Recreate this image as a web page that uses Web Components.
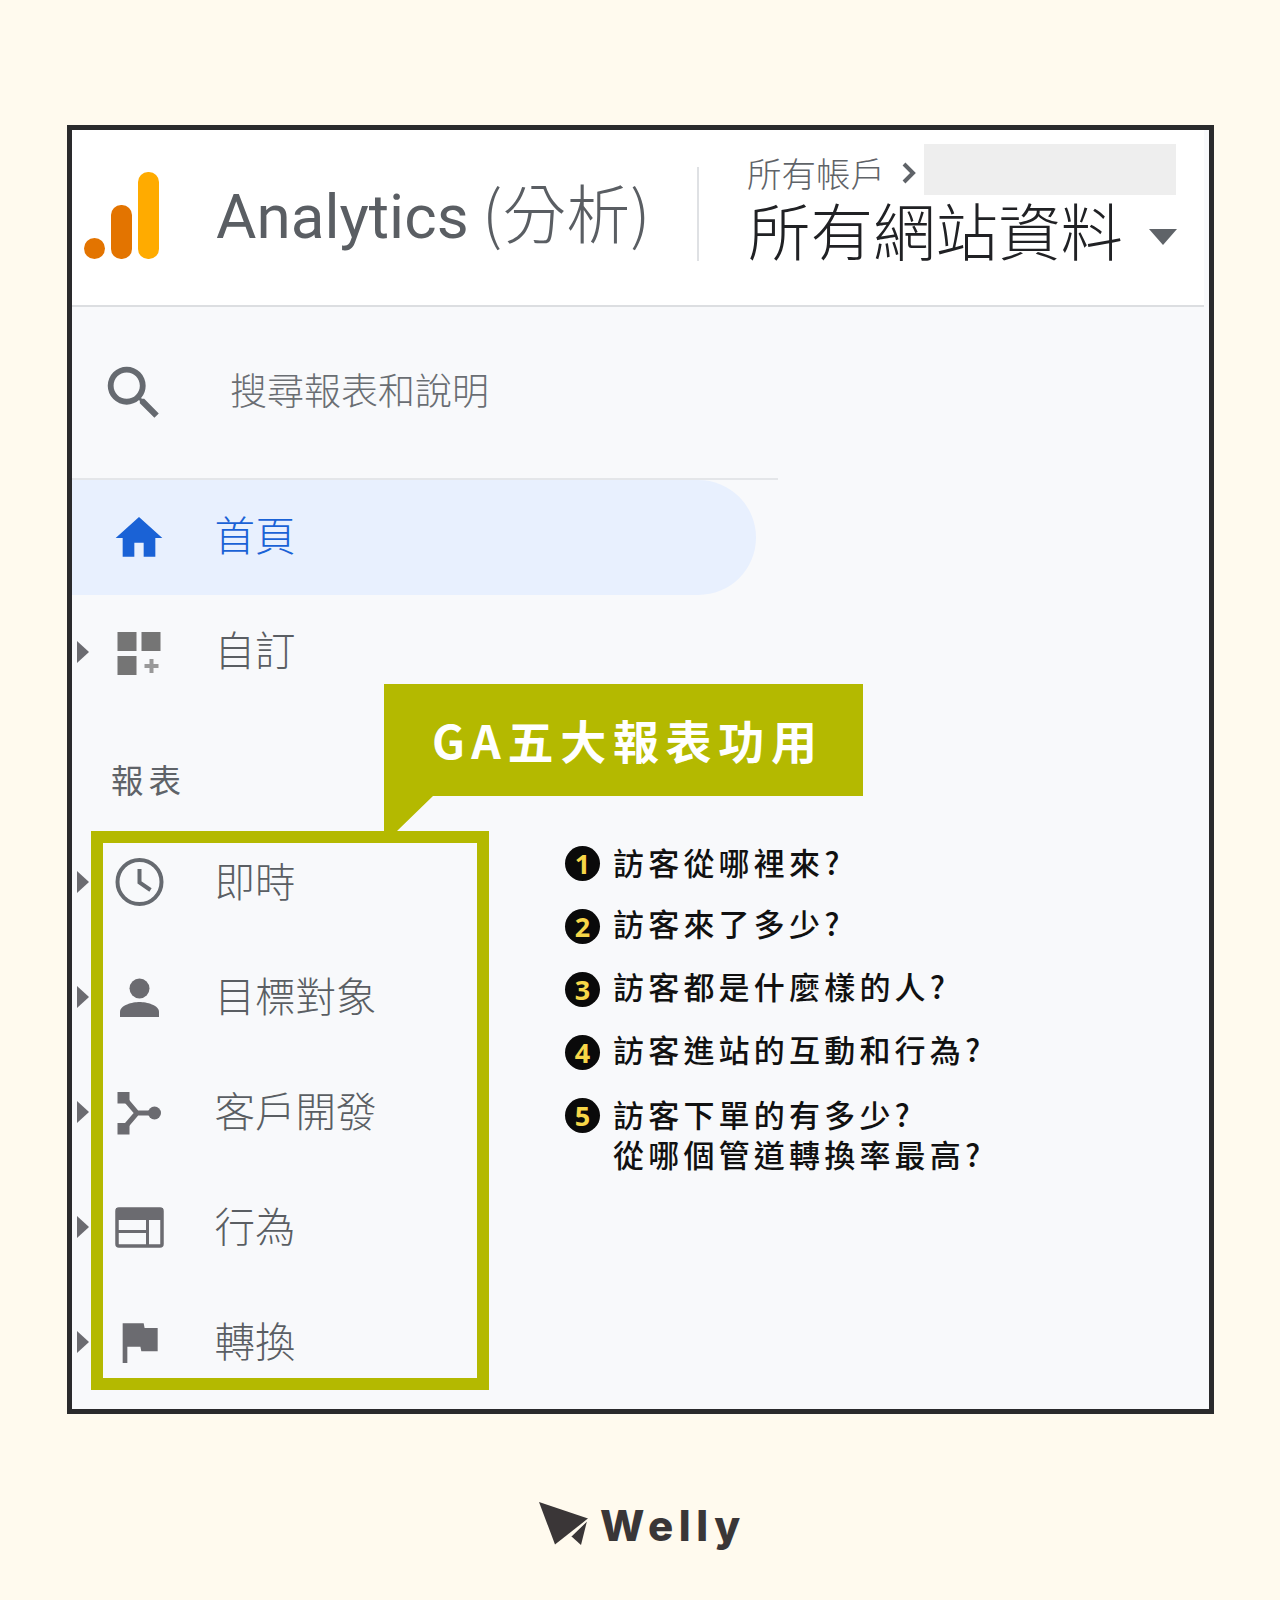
<!DOCTYPE html>
<html lang="zh-Hant">
<head>
<meta charset="utf-8">
<title>GA五大報表功用</title>
<style>
  html, body { margin: 0; padding: 0; }
  body {
    width: 1280px;
    height: 1600px;
    overflow: hidden;
    background: #fffaee;
    font-family: "Noto Sans CJK TC", "Noto Sans", sans-serif;
  }
  ga-card { margin: 125px 66px 0 67px; }
</style>
</head>
<body>

<ga-card>
  <ga-header slot="header"></ga-header>
  <ga-search slot="search" placeholder="搜尋報表和說明"></ga-search>

  <ga-nav-item slot="nav" active label="首頁" style="--label-shift: -7px">
    <svg slot="icon" viewBox="0 0 24 24"><path fill="#1a62d6" d="M10 20v-6h4v6h5v-8h3L12 3 2 12h3v8z"/></svg>
  </ga-nav-item>
  <ga-nav-item slot="nav" arrow label="自訂" style="height: 113px; --label-shift: -5px">
    <svg slot="icon" viewBox="0 0 56 56" fill="#757575">
      <rect x="6.500" y="8" width="19" height="19"/><rect x="30.500" y="8" width="19" height="19"/><rect x="6.500" y="32" width="19" height="19"/>
      <path fill="#999" d="M38.500 35h4v5h5v4h-5v5h-4v-5h-5v-4h5z"/>
    </svg>
  </ga-nav-item>

  <ga-section-label slot="nav">報表</ga-section-label>

  <ga-nav-item slot="nav" arrow label="即時">
    <svg slot="icon" viewBox="0 0 56 56" fill="none" stroke="#666a70" stroke-width="4">
      <circle cx="28.500" cy="28" r="22"/><path d="M28.500 15v13.500l11 7.500"/>
    </svg>
  </ga-nav-item>
  <ga-nav-item slot="nav" arrow label="目標對象">
    <svg slot="icon" viewBox="0 0 56 56" fill="#6b6b70">
      <circle cx="28.500" cy="19.500" r="10"/><path d="M9 48v-5c0-7 12.500-10 19.500-10S48 36 48 43v5z"/>
    </svg>
  </ga-nav-item>
  <ga-nav-item slot="nav" arrow label="客戶開發">
    <svg slot="icon" viewBox="0 0 56 56" fill="#6b6b70">
      <rect x="6.500" y="8" width="12" height="11.500"/><rect x="6.500" y="39" width="12" height="11.500"/><circle cx="43.500" cy="29" r="6.500"/>
      <path fill="none" stroke="#6b6b70" stroke-width="5" d="M14 15l12 14-12 14M26 29h15"/>
    </svg>
  </ga-nav-item>
  <ga-nav-item slot="nav" arrow label="行為">
    <svg slot="icon" viewBox="0 0 56 56">
      <rect x="6" y="10" width="45" height="37" rx="2" fill="none" stroke="#6b6b70" stroke-width="3.500"/>
      <rect x="5" y="9" width="47" height="12" fill="#6b6b70"/>
      <path fill="none" stroke="#6b6b70" stroke-width="3" d="M6 32.500h30.500M36.500 21v26"/>
    </svg>
  </ga-nav-item>
  <ga-nav-item slot="nav" arrow label="轉換">
    <svg slot="icon" viewBox="0 0 24 24"><path fill="#6b6b70" d="M14.400 6L14 4H5v17h2v-7h5.600l.4 2h7V6z"/></svg>
  </ga-nav-item>

  <ga-highlight slot="overlay"></ga-highlight>
  <ga-callout slot="overlay">GA五大報表功用</ga-callout>
  <ga-questions slot="overlay">
    <ga-question num="1" style="--badge-top: 4px">訪客從哪裡來?</ga-question>
    <ga-question num="2" style="margin-top: 21px">訪客來了多少?</ga-question>
    <ga-question num="3" style="margin-top: 23px">訪客都是什麼樣的人?</ga-question>
    <ga-question num="4" style="margin-top: 23px">訪客進站的互動和行為?</ga-question>
    <ga-question num="5" style="margin-top: 25px; --badge-top: 4px">訪客下單的有多少?<br>從哪個管道轉換率最高?</ga-question>
  </ga-questions>
</ga-card>

<welly-logo></welly-logo>

<script>
class GaCard extends HTMLElement {
    constructor() {
        super();
        this.shadowDOM = this.attachShadow({ mode: "open" });
    }

    connectedCallback() {
        this.shadowDOM.innerHTML = `
        <style>
            :host {
                display: block;
                position: relative;
                box-sizing: border-box;
                width: 1147px;
                height: 1289px;
                border: 5px solid #2a2a2c;
                background: #f8f9fb;
            }
            .sidebar { width: 706px; }
        </style>
        <slot name="header"></slot>
        <div class="sidebar">
            <slot name="search"></slot>
            <slot name="nav"></slot>
        </div>
        <slot name="overlay"></slot>
        `;
    }
}

class GaHeader extends HTMLElement {
    constructor() {
        super();
        this.shadowDOM = this.attachShadow({ mode: "open" });
    }

    connectedCallback() {
        this.shadowDOM.innerHTML = `
        <style>
            :host {
                display: flex;
                align-items: center;
                box-sizing: border-box;
                height: 177px;
                margin-right: 5px;
                padding-left: 10px;
                background: #fff;
                border-bottom: 2px solid #dcdee1;
                font-family: "Noto Sans CJK TC", sans-serif;
            }
            .logo { width: 78px; height: 89px; flex: none; margin-top: -5px; }
            .product {
                margin-left: 56px;
                width: 481px;
                flex: none;
                font-family: Roboto, "Noto Sans CJK TC", sans-serif;
                font-size: 62px;
                line-height: 80px;
                color: #5a5e63;
                white-space: nowrap;
                margin-top: -8px;
            }
            .product .zh { font-family: "Noto Sans CJK TC", sans-serif; font-weight: 300; font-size: 64px; margin-left: -2px; }
            .divider { width: 2px; height: 94px; background: #dfe1e4; flex: none; margin-top: -8px; }
            .scope { margin-left: 48px; flex: none; width: 430px; margin-top: -22px; }
            .crumbs { display: flex; align-items: center; height: 50px; }
            .crumbs span { font-size: 34.500px; font-weight: 300; color: #5f6368; width: 152px; line-height: 50px; white-space: nowrap; margin-top: 4px; }
            .crumbs svg { width: 16px; height: 24px; flex: none; margin: 6px 0 0 2px; }
            .blur { width: 252px; height: 51px; margin-left: 7px; background: #eeeeee; margin-top: -2px; }
            .view { display: flex; align-items: center; margin-top: -5px; }
            .view span { font-size: 62.500px; font-weight: 300; line-height: 78px; color: #202124; width: 401px; padding-left: 1px; white-space: nowrap; }
            .caret { width: 0; height: 0; border: 14.500px solid transparent; border-top: 16px solid #5f6368; border-bottom: 0; margin-top: 16px; }
        </style>
        <svg class="logo" viewBox="0 0 78 89">
            <rect x="56" y="1" width="21" height="87" rx="10" fill="#ffab00"/>
            <rect x="29" y="34" width="21" height="54" rx="10" fill="#e37400"/>
            <circle cx="12.500" cy="77.500" r="10.500" fill="#e37400"/>
        </svg>
        <div class="product">Analytics <span class="zh">(分析)</span></div>
        <div class="divider"></div>
        <div class="scope">
            <div class="crumbs">
                <span>所有帳戶</span>
                <svg viewBox="0 0 16 24"><path d="M3 3l9 9-9 9" fill="none" stroke="#5f6368" stroke-width="4"/></svg>
                <div class="blur"></div>
            </div>
            <div class="view"><span>所有網站資料</span><i class="caret"></i></div>
        </div>
        `;
    }
}

class GaSearch extends HTMLElement {
    constructor() {
        super();
        this.shadowDOM = this.attachShadow({ mode: "open" });
    }

    connectedCallback() {
        this.shadowDOM.innerHTML = `
        <style>
            :host {
                display: flex;
                align-items: center;
                box-sizing: border-box;
                height: 173px;
                padding: 0 0 0 27px;
                border-bottom: 2px solid #e4e6e9;
            }
            svg { width: 70px; height: 70px; flex: none; }
            span {
                margin-left: 61px;
                font-family: "Noto Sans CJK TC", sans-serif;
                font-size: 37px;
                font-weight: 300;
                color: #6a6e73;
                margin-top: -7px;
            }
        </style>
        <svg viewBox="0 0 24 24"><path fill="#666a70" d="M15.500 14h-.79l-.28-.27A6.471 6.471 0 0 0 16 9.500 6.500 6.500 0 1 0 9.500 16c1.610 0 3.090-.59 4.230-1.570l.27.28v.79l5 4.990L20.490 19l-4.990-5zm-6 0C7.010 14 5 11.990 5 9.500S7.010 5 9.500 5 14 7.010 14 9.500 11.990 14 9.500 14z"/></svg>
        <span>${this.getAttribute("placeholder")}</span>
        `;
    }
}

class GaNavItem extends HTMLElement {
    constructor() {
        super();
        this.shadowDOM = this.attachShadow({ mode: "open" });
    }

    connectedCallback() {
        const active = this.hasAttribute("active");
        this.shadowDOM.innerHTML = `
        <style>
            :host {
                display: grid;
                grid-template-columns: 38.500px 56px 1fr;
                align-items: center;
                height: 115px;
                width: ${active ? "684px" : "auto"};
                border-radius: ${active ? "0 58px 58px 0" : "0"};
                background: ${active ? "#e8f0fe" : "transparent"};
            }
            .arrow {
                width: 0;
                height: 0;
                margin-left: 5px;
                border-left: 12px solid #6b6b70;
                border-top: 11px solid transparent;
                border-bottom: 11px solid transparent;
                visibility: ${this.hasAttribute("arrow") ? "visible" : "hidden"};
            }
            ::slotted(svg) { width: 56px; height: 56px; display: block; }
            .label {
                margin-left: 48px;
                font-family: "Noto Sans CJK TC", sans-serif;
                font-size: 40.500px;
                font-weight: 300;
                line-height: 56px;
                margin-top: var(--label-shift, -3px);
                color: ${active ? "#1a62d6" : "#5a5e63"};
                white-space: nowrap;
            }
        </style>
        <i class="arrow"></i>
        <slot name="icon"></slot>
        <span class="label">${this.getAttribute("label")}</span>
        `;
    }
}

class GaSectionLabel extends HTMLElement {
    constructor() {
        super();
        this.shadowDOM = this.attachShadow({ mode: "open" });
    }

    connectedCallback() {
        this.shadowDOM.innerHTML = `
        <style>
            :host {
                display: block;
                box-sizing: border-box;
                height: 116px;
                padding: 46px 0 0 39px;
                font-family: "Noto Sans CJK TC", sans-serif;
                font-size: 32.500px;
                line-height: 50px;
                letter-spacing: 5px;
                color: #5f6368;
            }
        </style>
        <slot></slot>
        `;
    }
}

class GaHighlight extends HTMLElement {
    constructor() {
        super();
        this.attachShadow({ mode: "open" }).innerHTML = `
        <style>
            :host {
                display: block;
                position: absolute;
                left: 19px;
                top: 701px;
                box-sizing: border-box;
                width: 398px;
                height: 559px;
                border: 12px solid #b4b900;
            }
        </style>
        `;
    }
}

class GaCallout extends HTMLElement {
    constructor() {
        super();
        this.attachShadow({ mode: "open" }).innerHTML = `
        <style>
            :host {
                display: block;
                position: absolute;
                left: 312px;
                top: 554px;
                box-sizing: border-box;
                width: 479px;
                height: 147px;
                padding-left: 48px;
                background: #b4b900;
                clip-path: polygon(0 0, 100% 0, 100% 112px, 49px 112px, 13px 147px, 0 147px);
                font-family: "Noto Sans CJK TC", sans-serif;
                font-weight: 700;
                font-size: 46px;
                line-height: 110px;
                letter-spacing: 6.700px;
                color: #fff;
                white-space: nowrap;
            }
        </style>
        <slot></slot>
        `;
    }
}

class GaQuestions extends HTMLElement {
    constructor() {
        super();
        this.attachShadow({ mode: "open" }).innerHTML = `
        <style>
            :host {
                display: flex;
                flex-direction: column;
                position: absolute;
                left: 493px;
                top: 712px;
            }
        </style>
        <slot></slot>
        `;
    }
}

class GaQuestion extends HTMLElement {
    constructor() {
        super();
        this.shadowDOM = this.attachShadow({ mode: "open" });
    }

    connectedCallback() {
        this.shadowDOM.innerHTML = `
        <style>
            :host {
                display: flex;
                align-items: flex-start;
                gap: 13px;
                font-family: "Noto Sans CJK TC", sans-serif;
            }
            .num {
                display: flex;
                align-items: center;
                justify-content: center;
                width: 35px;
                height: 35px;
                margin-top: var(--badge-top, 6px);
                margin-bottom: -6px;
                flex: none;
                border-radius: 50%;
                background: #0a0a0a;
                color: #f7d648;
                font-family: "Noto Sans", sans-serif;
                font-weight: 700;
                font-size: 27px;
                line-height: 35px;
            }
            .text {
                font-size: 31px;
                line-height: 40px;
                letter-spacing: 4.200px;
                font-weight: 500;
                color: #111;
                white-space: nowrap;
            }
        </style>
        <span class="num">${this.getAttribute("num")}</span>
        <span class="text"><slot></slot></span>
        `;
    }
}

class WellyLogo extends HTMLElement {
    constructor() {
        super();
        this.attachShadow({ mode: "open" }).innerHTML = `
        <style>
            :host {
                display: flex;
                align-items: flex-start;
                gap: 11px;
                width: 204px;
                margin: 86px auto 0;
                color: #3a3637;
            }
            svg { width: 51px; height: 46px; flex: none; }
            span {
                font-family: Inter, "Liberation Sans", sans-serif;
                font-weight: 800;
                font-size: 42px;
                line-height: 46px;
                letter-spacing: 5.600px;
                margin-top: 3px;
                white-space: nowrap;
            }
        </style>
        <svg viewBox="0 0 51 46">
            <path fill="#3a3637" d="M1 2l49 16.500-33 26z"/>
            <path fill="#3a3637" d="M33 36l16-15-6 24z"/>
            <path stroke="#fffaee" stroke-width="1.500" fill="none" d="M33 36l17-16.500"/>
        </svg>
        <span>Welly</span>
        `;
    }
}

customElements.define("ga-card", GaCard);
customElements.define("ga-header", GaHeader);
customElements.define("ga-search", GaSearch);
customElements.define("ga-nav-item", GaNavItem);
customElements.define("ga-section-label", GaSectionLabel);
customElements.define("ga-highlight", GaHighlight);
customElements.define("ga-callout", GaCallout);
customElements.define("ga-questions", GaQuestions);
customElements.define("ga-question", GaQuestion);
customElements.define("welly-logo", WellyLogo);
</script>
</body>
</html>
